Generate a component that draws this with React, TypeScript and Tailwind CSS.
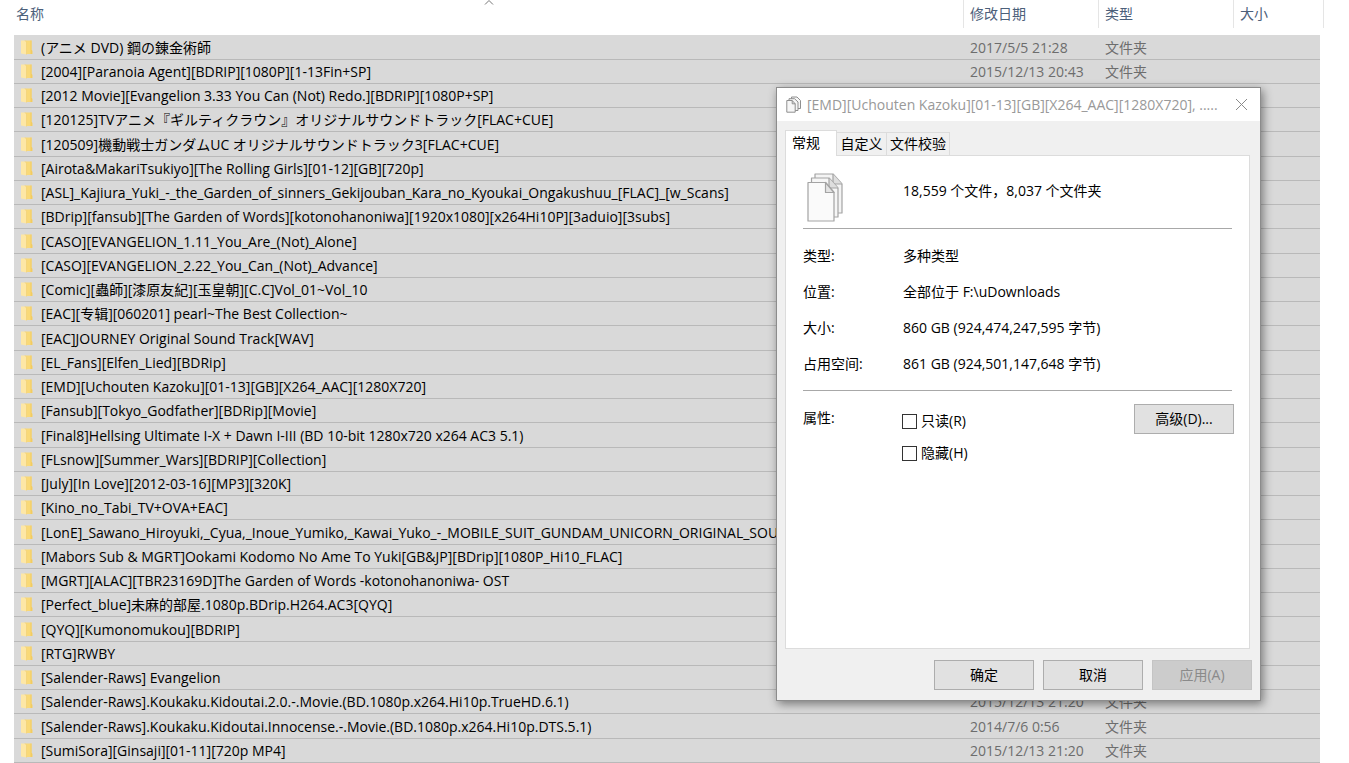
import type { ReactNode } from "react";

type Entry = { name: string; date?: string };

const entries: Entry[] = [
  { name: "(アニメ DVD) 鋼の錬金術師", date: "2017/5/5 21:28" },
  { name: "[2004][Paranoia Agent][BDRIP][1080P][1-13Fin+SP]", date: "2015/12/13 20:43" },
  { name: "[2012 Movie][Evangelion 3.33 You Can (Not) Redo.][BDRIP][1080P+SP]" },
  { name: "[120125]TVアニメ『ギルティクラウン』オリジナルサウンドトラック[FLAC+CUE]" },
  { name: "[120509]機動戦士ガンダムUC オリジナルサウンドトラック3[FLAC+CUE]" },
  { name: "[Airota&MakariTsukiyo][The Rolling Girls][01-12][GB][720p]" },
  { name: "[ASL]_Kajiura_Yuki_-_the_Garden_of_sinners_Gekijouban_Kara_no_Kyoukai_Ongakushuu_[FLAC]_[w_Scans]" },
  { name: "[BDrip][fansub][The Garden of Words][kotonohanoniwa][1920x1080][x264Hi10P][3aduio][3subs]" },
  { name: "[CASO][EVANGELION_1.11_You_Are_(Not)_Alone]" },
  { name: "[CASO][EVANGELION_2.22_You_Can_(Not)_Advance]" },
  { name: "[Comic][蟲師][漆原友紀][玉皇朝][C.C]Vol_01~Vol_10" },
  { name: "[EAC][专辑][060201] pearl~The Best Collection~" },
  { name: "[EAC]JOURNEY Original Sound Track[WAV]" },
  { name: "[EL_Fans][Elfen_Lied][BDRip]" },
  { name: "[EMD][Uchouten Kazoku][01-13][GB][X264_AAC][1280X720]" },
  { name: "[Fansub][Tokyo_Godfather][BDRip][Movie]" },
  { name: "[Final8]Hellsing Ultimate I-X + Dawn I-III (BD 10-bit 1280x720 x264 AC3 5.1)" },
  { name: "[FLsnow][Summer_Wars][BDRIP][Collection]" },
  { name: "[July][In Love][2012-03-16][MP3][320K]" },
  { name: "[Kino_no_Tabi_TV+OVA+EAC]" },
  { name: "[LonE]_Sawano_Hiroyuki,_Cyua,_Inoue_Yumiko,_Kawai_Yuko_-_MOBILE_SUIT_GUNDAM_UNICORN_ORIGINAL_SOU" },
  { name: "[Mabors Sub & MGRT]Ookami Kodomo No Ame To Yuki[GB&JP][BDrip][1080P_Hi10_FLAC]" },
  { name: "[MGRT][ALAC][TBR23169D]The Garden of Words -kotonohanoniwa- OST" },
  { name: "[Perfect_blue]未麻的部屋.1080p.BDrip.H264.AC3[QYQ]" },
  { name: "[QYQ][Kumonomukou][BDRIP]" },
  { name: "[RTG]RWBY" },
  { name: "[Salender-Raws] Evangelion" },
  { name: "[Salender-Raws].Koukaku.Kidoutai.2.0.-.Movie.(BD.1080p.x264.Hi10p.TrueHD.6.1)", date: "2015/12/13 21:20" },
  { name: "[Salender-Raws].Koukaku.Kidoutai.Innocense.-.Movie.(BD.1080p.x264.Hi10p.DTS.5.1)", date: "2014/7/6 0:56" },
  { name: "[SumiSora][Ginsaji][01-11][720p MP4]", date: "2015/12/13 21:20" },
];

const details = [
  { label: "类型:", value: "多种类型" },
  { label: "位置:", value: "全部位于 F:\\uDownloads" },
  { label: "大小:", value: "860 GB (924,474,247,595 字节)" },
  { label: "占用空间:", value: "861 GB (924,501,147,648 字节)" },
];

export default function App() {
  return (
    <main className="relative min-h-screen overflow-hidden bg-white pr-[25px] pl-3.5 font-['Open_Sans','Noto_Sans_CJK_SC',sans-serif] text-sm text-black">
      <FileTable />
      <PropertiesDialog />
    </main>
  );
}

function FileTable() {
  return (
    <table className="w-full table-fixed border-separate border-spacing-0">
      <colgroup>
        <col />
        <col className="w-[135px]" />
        <col className="w-[135px]" />
        <col className="w-[86px]" />
        <col className="w-1" />
      </colgroup>
      <thead>
        <tr className="text-left text-[#4c607a]">
          <th className="relative h-7 border-r border-[#e5e5e5] p-0 font-normal">
            <svg viewBox="0 0 10 5" className="absolute top-0 left-1/2 h-[5px] w-2.5 -translate-x-1/2" fill="none" stroke="#777">
              <path d="M1 4.500 5 .5l4 4" />
            </svg>
            <span className="pl-0.5">名称</span>
          </th>
          <th className="border-r border-[#e5e5e5] p-0 pl-1.5 font-normal">修改日期</th>
          <th className="border-r border-[#e5e5e5] p-0 pl-1.5 font-normal">类型</th>
          <th className="p-0 pl-1.5 font-normal">大小</th>
          <th className="border-r border-[#e5e5e5] p-0" />
        </tr>
        <tr className="h-[7px]"><td colSpan={5} className="p-0" /></tr>
      </thead>
      <tbody>
        {entries.map((entry) => (
          <tr key={entry.name} className="h-6 leading-[23px] [&:nth-child(4n+1)]:h-[25px]">
            <Cell>
              <span className="flex items-start gap-2 pl-[7px] whitespace-pre">
                <FolderIcon />
                {entry.name}
              </span>
            </Cell>
            <Cell><span className="pl-1.5 text-[#6d6d6d]">{entry.date}</span></Cell>
            <Cell><span className="pl-1.5 text-[#6d6d6d]">{entry.date && "文件夹"}</span></Cell>
            <Cell />
            <td className="p-0" />
          </tr>
        ))}
      </tbody>
    </table>
  );
}

function Cell({ children }: { children?: ReactNode }) {
  return <td className="overflow-hidden border-b border-[#b9b9b9] bg-[#d9d9d9] p-0 whitespace-nowrap">{children}</td>;
}

function PropertiesDialog() {
  return (
    <section
      role="dialog"
      aria-labelledby="dialog-title"
      className="absolute top-[87px] right-[88px] w-[485px] border border-[#8c8c8c] bg-[#f0f0f0] shadow-[2px_3px_9px_rgba(0,0,0,0.45)]"
    >
      <header className="flex h-[33px] items-center bg-white pr-3 pl-[9px] text-[#999]">
        <SmallPagesIcon />
        <h1 id="dialog-title" className="ml-1.5 flex-1 whitespace-nowrap">
          [EMD][Uchouten Kazoku][01-13][GB][X264_AAC][1280X720], .....
        </h1>
        <button type="button" aria-label="关闭">
          <svg viewBox="0 0 13 13" className="size-[13px]" fill="none" stroke="#8a8a8a">
            <path d="m1 1 11 11M12 1 1 12" />
          </svg>
        </button>
      </header>

      <div className="px-2 pt-[9px] pb-2.5">
        <div role="tablist" className="flex items-end leading-5">
          <button type="button" role="tab" aria-selected="true" className="z-10 -mb-px h-[26px] w-[52px] border border-b-0 border-[#dcdcdc] bg-white pr-2.5 pb-0.5 whitespace-nowrap">常规</button>
          <button type="button" role="tab" aria-selected="false" className="h-[23px] w-[50px] border border-b-0 border-l-0 border-[#dcdcdc] whitespace-nowrap">自定义</button>
          <button type="button" role="tab" aria-selected="false" className="h-[23px] w-[63px] border border-b-0 border-l-0 border-[#dcdcdc] whitespace-nowrap">文件校验</button>
        </div>

        <div role="tabpanel" className="mr-0.5 h-[494px] border border-[#dcdcdc] bg-white pt-[17px] pr-[17px] pl-[17px]">
          <div className="flex h-14 border-b border-[#a8a8a8]">
            <div className="w-[100px] pl-1">
              <PagesIcon />
            </div>
            <p className="pt-2 leading-5">18,559 个文件，8,037 个文件夹</p>
          </div>

          <dl className="mt-[17px] flex flex-col gap-4 leading-5">
            {details.map((item) => (
              <div key={item.label} className="flex">
                <dt className="w-[100px]">{item.label}</dt>
                <dd>{item.value}</dd>
              </div>
            ))}
          </dl>

          <div className="mt-4 border-t border-[#a8a8a8] pt-[13px]">
            <div className="-mr-0.5 flex leading-5">
              <span className="w-[99px] pt-1">属性:</span>
              <div className="flex flex-1 flex-col gap-3 pt-[7px]">
                <CheckField label="只读(R)" />
                <CheckField label="隐藏(H)" />
              </div>
              <DialogButton>高级(D)...</DialogButton>
            </div>
          </div>
        </div>

        <footer className="mt-[11px] flex justify-end gap-[9px]">
          <DialogButton>确定</DialogButton>
          <DialogButton>取消</DialogButton>
          <DialogButton disabled>应用(A)</DialogButton>
        </footer>
      </div>
    </section>
  );
}

function CheckField({ label }: { label: string }) {
  return (
    <label className="flex items-center gap-1">
      <input type="checkbox" className="size-[15px] appearance-none border border-[#333] bg-white checked:bg-[#333]" />
      {label}
    </label>
  );
}

function DialogButton({ children, disabled }: { children: ReactNode; disabled?: boolean }) {
  return (
    <button
      type="button"
      disabled={disabled}
      className="h-[30px] w-[100px] border border-[#adadad] bg-[#e1e1e1] disabled:border-[#c4c4c4] disabled:bg-[#cccccc] disabled:text-[#8a8a8a]"
    >
      {children}
    </button>
  );
}

function FolderIcon() {
  return (
    <svg viewBox="0 0 12 15" className="mt-1 h-[15px] w-3 shrink-0">
      <path d="M4 .5h6.500V10l.8.800V14H4z" fill="#f9d978" />
      <path d="M9.500 .5h1V10l.8.800V14H9.500z" fill="#f2cb62" />
      <path d="M0 .5h4l1.500 1.500v12.500L0 13.500z" fill="#fde7a6" />
      <path d="M4 .5l1.500 1.500v12.500" fill="none" stroke="#f0cd70" strokeWidth=".6" />
    </svg>
  );
}

function SmallPagesIcon() {
  return (
    <svg viewBox="0 0 15 17" className="h-[17px] w-[15px]" fill="#f7f7f7" stroke="#8f8f8f" strokeLinejoin="round">
      <path d="M5.500 1h5.500l3.500 3.500v8h-9z" />
      <path d="M3 2.700h5.500L12 6v8.500H3z" />
      <path d="M.8 4.500h5.400l3 3.300v8.400H.8z" />
      <path d="M6.200 4.500v3.300h3" fill="none" />
    </svg>
  );
}

function PagesIcon() {
  return (
    <svg viewBox="0 0 36 49" className="h-[49px] w-9" stroke="#a3a3a3" strokeWidth="1.200" strokeLinejoin="round">
      <path d="M8 1h18l9 10v29H8z" fill="#f4f4f4" />
      <path d="M26 1v10h9" fill="#dedede" />
      <path d="M4.500 5H22l9 10v29H4.500z" fill="#f6f6f6" />
      <path d="M22 5v10h9" fill="#dedede" />
      <path d="M1 9.500h17.500l8.500 10V48H1z" fill="#fafafa" />
      <path d="M18.500 9.500v10H27z" fill="#e4e4e4" />
    </svg>
  );
}
